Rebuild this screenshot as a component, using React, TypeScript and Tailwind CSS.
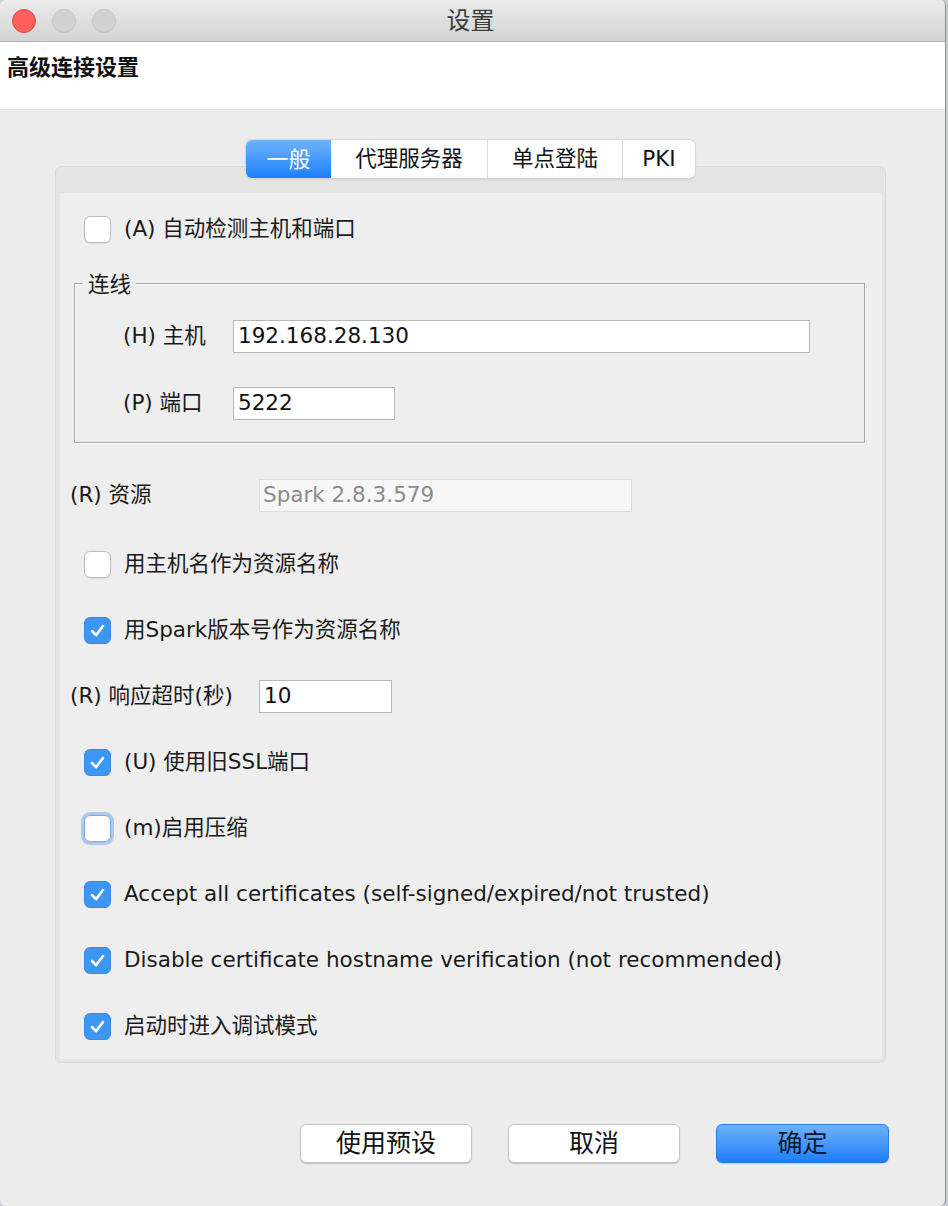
import { Fragment } from "react"

const font = "font-['DejaVu_Sans','Noto_Sans_CJK_SC',sans-serif]"

function Check({ checked, focus }: { checked?: boolean; focus?: boolean }) {
  if (checked) {
    return (
      <span className="w-[27px] h-[27px] shrink-0 rounded-[6px] bg-[#3d96f4] border border-[#3a8ae6] flex items-center justify-center">
        <svg width="19" height="19" viewBox="0 0 19 19" fill="none">
          <path d="M4 10 L8 14.2 L15 5" stroke="white" strokeWidth="2.6" strokeLinecap="round" strokeLinejoin="round" />
        </svg>
      </span>
    )
  }
  return (
    <span
      className={
        focus
          ? "w-[27px] h-[27px] shrink-0 rounded-[6px] bg-white border border-[#7aa9e0] shadow-[0_0_0_3px_rgba(120,170,235,0.55)]"
          : "w-[27px] h-[27px] shrink-0 rounded-[6px] bg-white border border-[#bcbcbc] shadow-[0_1px_1px_rgba(0,0,0,0.08)]"
      }
    />
  )
}

function CheckRow({ label, checked, focus }: { label: string; checked?: boolean; focus?: boolean }) {
  return (
    <div className="h-[66px] flex items-center pl-[24px] gap-[13px]">
      <Check checked={checked} focus={focus} />
      <span className="text-[21.5px] text-[#1a1a1a] whitespace-nowrap">{label}</span>
    </div>
  )
}

function Field({ value, width, disabled }: { value: string; width: string; disabled?: boolean }) {
  return (
    <div
      className={
        disabled
          ? `${width} h-[33px] flex items-center pl-[3px] bg-[#f7f7f7] border border-[#dadada] text-[21.5px] text-[#8c8c8c]`
          : `${width} h-[33px] flex items-center pl-[4px] bg-white border border-[#b7b7b7] text-[21.5px] text-[#111]`
      }
    >
      {value}
    </div>
  )
}

const tabs = [
  { name: "一般", w: "w-[85px]" },
  { name: "代理服务器", w: "w-[156px]" },
  { name: "单点登陆", w: "w-[134px]" },
  { name: "PKI", w: "w-[72px]" },
]

export default function App() {
  return (
    <div className={`w-[948px] h-[1206px] bg-[#c9cdd3] flex ${font}`}>
      <div className="w-[946px] h-full flex flex-col bg-[#ececec] border-r border-[#8c8c8c] rounded-t-[6px] rounded-b-[6px] overflow-hidden">
        {/* title bar */}
        <div className="h-[42px] shrink-0 grid grid-cols-[1fr_auto_1fr] items-center bg-linear-to-b from-[#ebebeb] to-[#d3d3d3] border-b border-[#b2b2b2]">
          <div className="flex items-center gap-[16px] pl-[12px]">
            <span className="w-[24px] h-[24px] rounded-full bg-[#fc605b] border border-[#de4b44]" />
            <span className="w-[24px] h-[24px] rounded-full bg-[#d2d2d2] border border-[#c1c1c1]" />
            <span className="w-[24px] h-[24px] rounded-full bg-[#d2d2d2] border border-[#c1c1c1]" />
          </div>
          <div className="text-[24px] text-[#3b3b3b] -ml-[4px]">设置</div>
          <div />
        </div>

        {/* header */}
        <div className="h-[68px] shrink-0 bg-white border-b border-[#e4e4e4] px-[7px] pt-[9px] text-[22px] font-bold text-[#111]">
          高级连接设置
        </div>

        {/* body */}
        <div className="flex-1 flex flex-col pl-[55px] pr-[56px] pt-[30px]">
          <div className="mr-[3px] flex flex-col">
            <div className="relative z-10 flex justify-center">
              <div className="flex h-[38px] rounded-[6px] bg-white overflow-hidden shadow-[0_0_0_1px_#d6d6d6,0_1px_2px_rgba(0,0,0,0.18)]">
                {tabs.map((t, i) => (
                  <Fragment key={t.name}>
                    {i > 1 && <span className="w-px bg-[#dcdcdc]" />}
                    <div
                      className={
                        i === 0
                          ? `${t.w} flex items-center justify-center text-[22px] text-white bg-linear-to-b from-[#6db4fb] to-[#1a7ffb]`
                          : `${t.w} flex items-center justify-center text-[21.5px] text-[#111]`
                      }
                    >
                      {t.name}
                    </div>
                  </Fragment>
                ))}
              </div>
            </div>

            {/* panel */}
            <div className="-mt-[12px] rounded-[6px] bg-[#e4e4e4] border border-[#dadada] pt-[26px] pl-[4px] pr-[3px] pb-[3px]">
              <div className="bg-[#eeeeee] flex flex-col pt-[3px]">
                <CheckRow label="(A) 自动检测主机和端口" />

                <fieldset className="mt-[12px] ml-[14px] mr-[17px] border border-[#a4a4a4] shadow-[inset_1px_1px_0_#fff,1px_1px_0_#fff]">
                  <legend className="ml-[8px] px-[5px] leading-[16px] pt-[3px] text-[21.5px] text-[#1a1a1a] bg-[#eeeeee]">连线</legend>
                  <div className="flex flex-col gap-[34px] pt-[27px] pb-[22px] pl-[48px]">
                    <div className="flex items-center">
                      <span className="w-[110px] shrink-0 text-[21.5px] text-[#1a1a1a]">(H) 主机</span>
                      <Field value="192.168.28.130" width="w-[577px]" />
                    </div>
                    <div className="flex items-center">
                      <span className="w-[110px] shrink-0 text-[21.5px] text-[#1a1a1a]">(P) 端口</span>
                      <Field value="5222" width="w-[162px]" />
                    </div>
                  </div>
                </fieldset>

                <div className="mt-[22px] h-[66px] pb-[6px] flex items-center pl-[10px]">
                  <span className="w-[189px] shrink-0 text-[21.5px] text-[#1a1a1a]">(R) 资源</span>
                  <Field value="Spark 2.8.3.579" width="w-[373px]" disabled />
                </div>

                <CheckRow label="用主机名作为资源名称" />
                <CheckRow label="用Spark版本号作为资源名称" checked />

                <div className="h-[66px] flex items-center pl-[10px]">
                  <span className="w-[189px] shrink-0 text-[21.5px] text-[#1a1a1a]">(R) 响应超时(秒)</span>
                  <Field value="10" width="w-[133px]" />
                </div>

                <CheckRow label="(U) 使用旧SSL端口" checked />
                <CheckRow label="(m)启用压缩" focus />
                <CheckRow label="Accept all certificates (self-signed/expired/not trusted)" checked />
                <CheckRow label="Disable certificate hostname verification (not recommended)" checked />
                <CheckRow label="启动时进入调试模式" checked />
              </div>
            </div>
          </div>

          {/* buttons */}
          <div className="mt-[61px] flex justify-end gap-[36px]">
            <button className="w-[172px] h-[39px] rounded-[6px] bg-white border border-[#c4c4c4] shadow-[0_1px_1px_rgba(0,0,0,0.18)] text-[25px] text-[#111]">
              使用预设
            </button>
            <button className="w-[172px] h-[39px] rounded-[6px] bg-white border border-[#c4c4c4] shadow-[0_1px_1px_rgba(0,0,0,0.18)] text-[25px] text-[#111]">
              取消
            </button>
            <button className="w-[173px] h-[39px] rounded-[6px] bg-linear-to-b from-[#6cb2fb] to-[#1a7dfa] border border-[#2b7ce0] shadow-[0_1px_1px_rgba(0,0,0,0.15)] text-[25px] text-[#0d1a33]">
              确定
            </button>
          </div>
        </div>
      </div>
    </div>
  )
}
